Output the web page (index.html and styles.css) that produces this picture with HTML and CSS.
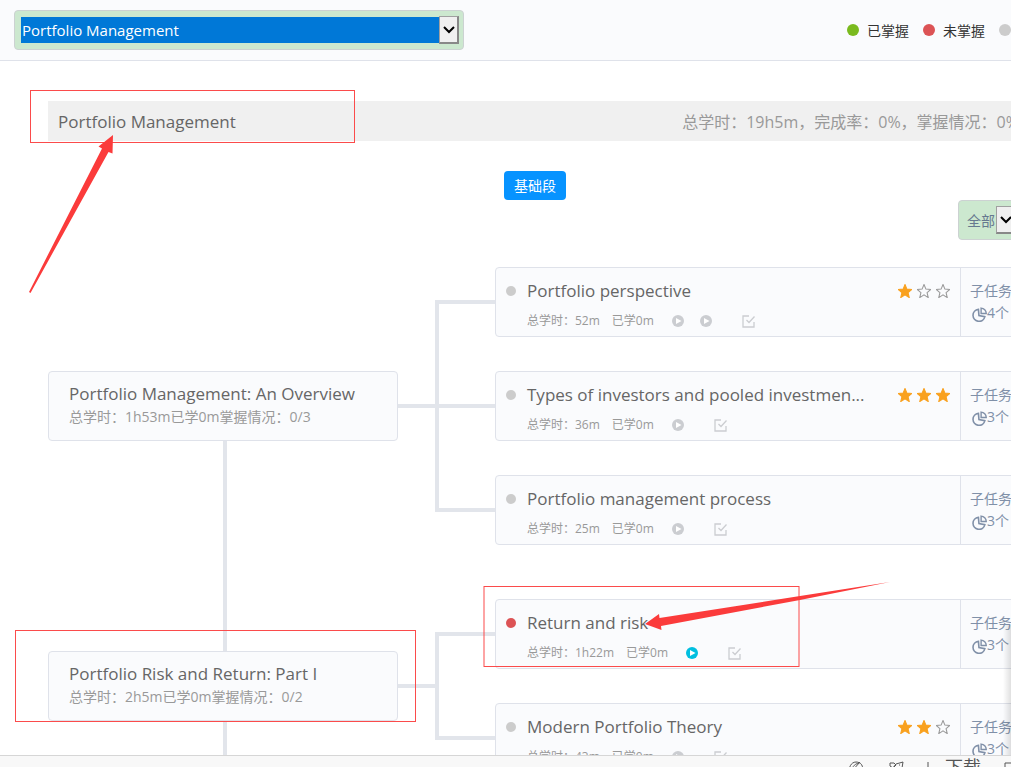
FILE: index.html
```html
<!DOCTYPE html>
<html lang="zh-CN">
<head>
  <meta charset="UTF-8">
  <meta name="viewport" content="width=device-width, initial-scale=1.0">
  <title>Portfolio Management</title>
  <link rel="stylesheet" href="styles.css">
</head>
<body>
  <!-- iconos compartidos -->
  <svg class="sprite" aria-hidden="true">
    <symbol id="star" viewBox="0.7 0.3 12.6 13.2"><path d="M7 .8l1.8 4.3 4.6.4-3.5 3 1.1 4.6L7 10.6l-4 2.5 1.100-4.600-3.500-3 4.600-.4z"/></symbol>
    <symbol id="play" viewBox="0 0 12 12"><circle cx="6" cy="6" r="6" fill="currentColor"/><path d="M4 3L9.500 6 4 9z" fill="#fff"/></symbol>
    <symbol id="check" viewBox="0 0 13 13"><path d="M7 1H1v11h11V7M4.500 5l2.500 2.500L12.500 1.500" fill="none" stroke="currentColor" stroke-width="1.300"/></symbol>
    <symbol id="pie" viewBox="0 0 14 14"><path d="M6 2.200A5.600 5.600 0 1 0 12 9L6.500 8z" fill="none" stroke="currentColor" stroke-width="1.500"/><path d="M8.500 1v5H13.300A5 5 0 0 0 8.500 1z" fill="none" stroke="currentColor" stroke-width="1.300"/></symbol>
    <symbol id="arrow" viewBox="0 0 12 8"><path d="M1 1l5 5 5-5" fill="none" stroke="#000" stroke-width="2"/></symbol>
  </svg>

  <div class="app">
    <div class="viewport">
      <div class="page">
        <header class="topbar">
          <div class="select-box course">
            <select aria-label="课程">
              <option>Portfolio Management</option>
            </select>
            <span class="select-arrow"><svg><use href="#arrow"/></svg></span>
          </div>
          <ul class="legend">
            <li><i class="dot green"></i>已掌握</li>
            <li><i class="dot red"></i>未掌握</li>
            <li><i class="dot"></i>未学习</li>
          </ul>
        </header>

        <main class="content">
          <div class="summary">
            <h1>Portfolio Management</h1>
            <p>总学时：19h5m，完成率：0%，掌握情况：0%</p>
          </div>

          <div class="stage-row"><button class="stage" type="button">基础段</button></div>
          <div class="filter-row">
            <div class="select-box">
              <select aria-label="筛选">
                <option>全部</option>
              </select>
              <span class="select-arrow"><svg><use href="#arrow"/></svg></span>
            </div>
          </div>

          <section class="group">
            <div class="chapter-col">
              <div class="spine"></div>
              <div class="chapter">
                <h2>Portfolio Management: An Overview</h2>
                <p>总学时：1h53m已学0m掌握情况：0/3</p>
              </div>
              <div class="spine"></div>
            </div>
            <div class="stem"></div>
            <div class="leaves">
              <div class="leaf">
                <div class="branch"></div>
                <article class="card">
                  <div class="card-main">
                    <div class="title"><i class="dot"></i><h3>Portfolio perspective</h3>
                      <span class="stars"><svg class="on"><use href="#star"/></svg><svg><use href="#star"/></svg><svg><use href="#star"/></svg></span>
                    </div>
                    <div class="meta"><span>总学时：52m</span><span>已学0m</span>
                      <span class="tasks"><svg class="play"><use href="#play"/></svg><svg class="play"><use href="#play"/></svg><svg class="check"><use href="#check"/></svg></span>
                    </div>
                  </div>
                  <div class="card-side">子任务<br><svg><use href="#pie"/></svg>4个</div>
                </article>
              </div>
              <div class="leaf">
                <div class="branch"></div>
                <article class="card">
                  <div class="card-main">
                    <div class="title"><i class="dot"></i><h3>Types of investors and pooled investmen...</h3>
                      <span class="stars"><svg class="on"><use href="#star"/></svg><svg class="on"><use href="#star"/></svg><svg class="on"><use href="#star"/></svg></span>
                    </div>
                    <div class="meta"><span>总学时：36m</span><span>已学0m</span>
                      <span class="tasks"><svg class="play"><use href="#play"/></svg><svg class="check"><use href="#check"/></svg></span>
                    </div>
                  </div>
                  <div class="card-side">子任务<br><svg><use href="#pie"/></svg>3个</div>
                </article>
              </div>
              <div class="leaf">
                <div class="branch"></div>
                <article class="card">
                  <div class="card-main">
                    <div class="title"><i class="dot"></i><h3>Portfolio management process</h3></div>
                    <div class="meta"><span>总学时：25m</span><span>已学0m</span>
                      <span class="tasks"><svg class="play"><use href="#play"/></svg><svg class="check"><use href="#check"/></svg></span>
                    </div>
                  </div>
                  <div class="card-side">子任务<br><svg><use href="#pie"/></svg>3个</div>
                </article>
              </div>
            </div>
          </section>

          <section class="group">
            <div class="chapter-col">
              <div class="spine"></div>
              <div class="chapter">
                <h2>Portfolio Risk and Return: Part I</h2>
                <p>总学时：2h5m已学0m掌握情况：0/2</p>
              </div>
              <div class="spine"></div>
            </div>
            <div class="stem"></div>
            <div class="leaves">
              <div class="leaf">
                <div class="branch"></div>
                <article class="card">
                  <div class="card-main">
                    <div class="title"><i class="dot red"></i><h3>Return and risk</h3></div>
                    <div class="meta"><span>总学时：1h22m</span><span>已学0m</span>
                      <span class="tasks"><svg class="play active"><use href="#play"/></svg><svg class="check"><use href="#check"/></svg></span>
                    </div>
                  </div>
                  <div class="card-side">子任务<br><svg><use href="#pie"/></svg>3个</div>
                </article>
              </div>
              <div class="leaf">
                <div class="branch"></div>
                <article class="card">
                  <div class="card-main">
                    <div class="title"><i class="dot"></i><h3>Modern Portfolio Theory</h3>
                      <span class="stars"><svg class="on"><use href="#star"/></svg><svg class="on"><use href="#star"/></svg><svg><use href="#star"/></svg></span>
                    </div>
                    <div class="meta"><span>总学时：43m</span><span>已学0m</span>
                      <span class="tasks"><svg class="play"><use href="#play"/></svg><svg class="check"><use href="#check"/></svg></span>
                    </div>
                  </div>
                  <div class="card-side">子任务<br><svg><use href="#pie"/></svg>3个</div>
                </article>
              </div>
            </div>
          </section>
        </main>
      </div>
      <div class="edge-shadow"></div>
    </div>

    <footer class="statusbar">
      <svg class="tool" viewBox="0 0 18 18"><path d="M3 14C1 9 4 3 9 3s8 4 6 10M5 14C4 9 7 5 12 4M8 8l4 4M13 3L5 12"/></svg>
      <svg class="tool" viewBox="0 0 18 18"><path d="M9 5l7-2-1 6-5 6-2-3-3-2zM3 7V4h4l2 2-3 3zM12 6h1"/></svg>
      <a class="download" href="#"><svg class="tool" viewBox="0 0 18 18"><path d="M9 3v11M5 10l4 4 4-4"/></svg>下载</a>
      <svg class="tool" viewBox="0 0 18 18"><path d="M2 4h14v11H2zM2 9h14M9 4v11"/></svg>
    </footer>
  </div>

  <!-- marcas rojas sobre la página -->
  <svg class="marks" aria-hidden="true">
    <rect x="30.500" y="90.500" width="324" height="52"/>
    <rect x="15.500" y="630.500" width="400" height="91"/>
    <rect x="484" y="586.500" width="315" height="80"/>
    <path d="M29 292L102 148.500 98.500 146.500 113 135 112.500 153.500 108.500 152 30.500 293z"/>
    <path d="M645 624L659 614 659.500 618 800 596 890 582 800 600 661 626 661.500 630z"/>
  </svg>
</body>
</html>
```
FILE: styles.css
```css
*, *::before, *::after { box-sizing: border-box; }
body {
  margin: 0;
  font-family: 'Open Sans', 'Noto Sans CJK SC', sans-serif;
  font-size: 14px;
  color: #333;
  background: #fff;
}
h1, h2, h3, p, ul { margin: 0; padding: 0; font-weight: normal; }
.sprite { display: none; }

.app {
  display: flex;
  flex-direction: column;
  height: 100vh;
  overflow: hidden;
}
.viewport {
  position: relative;
  flex: 1;
  min-height: 0;
  overflow: hidden;
}
/* la página es más ancha que la ventana */
.page { width: calc(100% + 100px); }

.topbar {
  display: flex;
  align-items: center;
  justify-content: space-between;
  height: 61px;
  padding: 0 50px 0 14px;
  background: #fafbfd;
  border-bottom: 1px solid #dfe2ea;
}
.select-box {
  display: flex;
  align-items: center;
  height: 40px;
  padding: 0 4px 0 7px;
  background: #cce8cf;
  border: 1px solid #ccd2d2;
  border-radius: 4px;
}
.select-box select {
  appearance: none;
  flex: 1;
  height: 26px;
  margin: 0;
  padding: 0 1px;
  border: 0;
  border-radius: 0;
  background: none;
  color: #66788f;
  font: inherit;
}
.course { width: 450px; padding-left: 6px; }
.course select { background: #0078d7; color: #fff; font-size: 15px; }
.select-arrow {
  display: flex;
  align-items: center;
  justify-content: center;
  width: 20px;
  height: 28px;
  background: #f0f0f0;
  border: 1px solid #a0a0a0;
  border-right: 2px solid #888;
  border-bottom: 2px solid #888;
  pointer-events: none;
}
.select-arrow svg { width: 12px; height: 8px; }

.legend {
  display: flex;
  gap: 14px;
  list-style: none;
}
.legend li {
  display: flex;
  align-items: center;
  gap: 8px;
}
.dot {
  flex: none;
  width: 10px;
  height: 10px;
  border-radius: 50%;
  background: #ccc;
}
.legend .dot { width: 12px; height: 12px; }
.dot.green { background: #7aba1e; }
.dot.red { background: #dc5355; }

.content { padding: 40px 48px 0; }
.summary {
  display: flex;
  align-items: center;
  justify-content: space-between;
  height: 40px;
  padding: 0 44px 0 10px;
  background: #f0f0f0;
}
.summary h1 { font-size: 17px; color: #666; }
.summary p { font-size: 16px; color: #999; }

.stage-row { padding: 30px 0 0 456px; }
.stage {
  display: block;
  height: 29px;
  padding: 0 10px 2px;
  border: 0;
  border-radius: 4px;
  background: #0793ff;
  color: #fff;
  font: inherit;
}
.filter-row {
  display: flex;
  justify-content: flex-end;
  padding-right: 42px;
}

.group { display: flex; }
.chapter-col {
  display: flex;
  flex-direction: column;
  width: 350px;
}
.spine {
  flex: 1;
  width: 4px;
  margin-left: 175px;
  background: #e2e5eb;
}
.group:first-of-type .spine:first-child { background: none; }
.chapter {
  height: 70px;
  padding: 10px 20px;
  background: #fafbfd;
  border: 1px solid #dfe2ea;
  border-radius: 4px;
}
.chapter h2 { font-size: 17px; line-height: 24px; color: #666; }
.chapter p { line-height: 22px; color: #999; }
.stem {
  align-self: center;
  width: 37px;
  height: 4px;
  background: #e2e5eb;
}

.leaves { flex: 1; min-width: 0; padding: 10px 0; }
.leaf { display: flex; align-items: center; }
.branch {
  display: flex;
  flex-direction: column;
  align-self: stretch;
  width: 60px;
}
.branch::before {
  content: '';
  height: calc(50% + 2px);
  border-left: 4px solid #e2e5eb;
  border-bottom: 4px solid #e2e5eb;
}
.branch::after {
  content: '';
  flex: 1;
  border-left: 4px solid #e2e5eb;
}
.leaf:first-child .branch::before { border-left: 0; }
.leaf:last-child .branch::after { border-left: 0; }

.card {
  display: flex;
  flex: 1;
  min-width: 0;
  height: 70px;
  margin: 17px 0;
  background: #fafbfd;
  border: 1px solid #dfe2ea;
  border-radius: 4px;
}
.card-main { flex: 1; min-width: 0; padding: 11px 10px 0; }
.title {
  display: flex;
  align-items: center;
  gap: 11px;
}
.title h3 { font-size: 17px; line-height: 24px; color: #666; white-space: nowrap; }
.stars { display: flex; gap: 5px; margin-left: auto; }
.stars svg {
  width: 14px;
  height: 14px;
  fill: none;
  stroke: #999;
}
.stars .on { fill: #f9a11f; stroke: #f9a11f; }
.meta {
  display: flex;
  align-items: center;
  gap: 12px;
  padding: 9px 0 0 21px;
  font-size: 12px;
  line-height: 18px;
  color: #999;
}
.tasks {
  display: flex;
  align-items: center;
  gap: 16px;
  padding-left: 6px;
  color: #cbcdd1;
}
.play { width: 12px; height: 12px; }
.play.active { color: #00bfe0; }
.check { width: 13px; height: 13px; margin-left: 14px; }
.card-side {
  width: 102px;
  padding: 12px 0 0 9px;
  border-left: 1px solid #dfe2ea;
  line-height: 22px;
  color: #8090a8;
}
.card-side svg {
  width: 15px;
  height: 15px;
  margin-left: 2px;
  vertical-align: -4px;
}

.edge-shadow {
  position: absolute;
  right: 0;
  bottom: 0;
  width: 8px;
  height: 130px;
  background: linear-gradient(to right, rgba(0, 0, 0, 0), rgba(0, 0, 0, 0.12));
}
.statusbar {
  display: flex;
  justify-content: flex-end;
  gap: 22px;
  height: 12px;
  padding-left: 20px;
  background: #f8f8f8;
  border-top: 1px solid #d6d6d6;
  overflow: hidden;
  color: #555;
}
.tool {
  flex: none;
  width: 18px;
  height: 18px;
  margin-top: 3px;
  fill: none;
  stroke: currentColor;
}
.statusbar > .tool:last-child { margin-right: -10px; }
.download {
  display: flex;
  gap: 8px;
  margin-left: -8px;
  color: #555;
  font-size: 18px;
  line-height: 22px;
  text-decoration: none;
}

.marks {
  position: absolute;
  top: 0;
  left: 0;
  width: 100%;
  height: 100%;
  pointer-events: none;
  fill: #fb3b3b;
}
.marks rect { fill: none; stroke: #fb4b4b; }
```
